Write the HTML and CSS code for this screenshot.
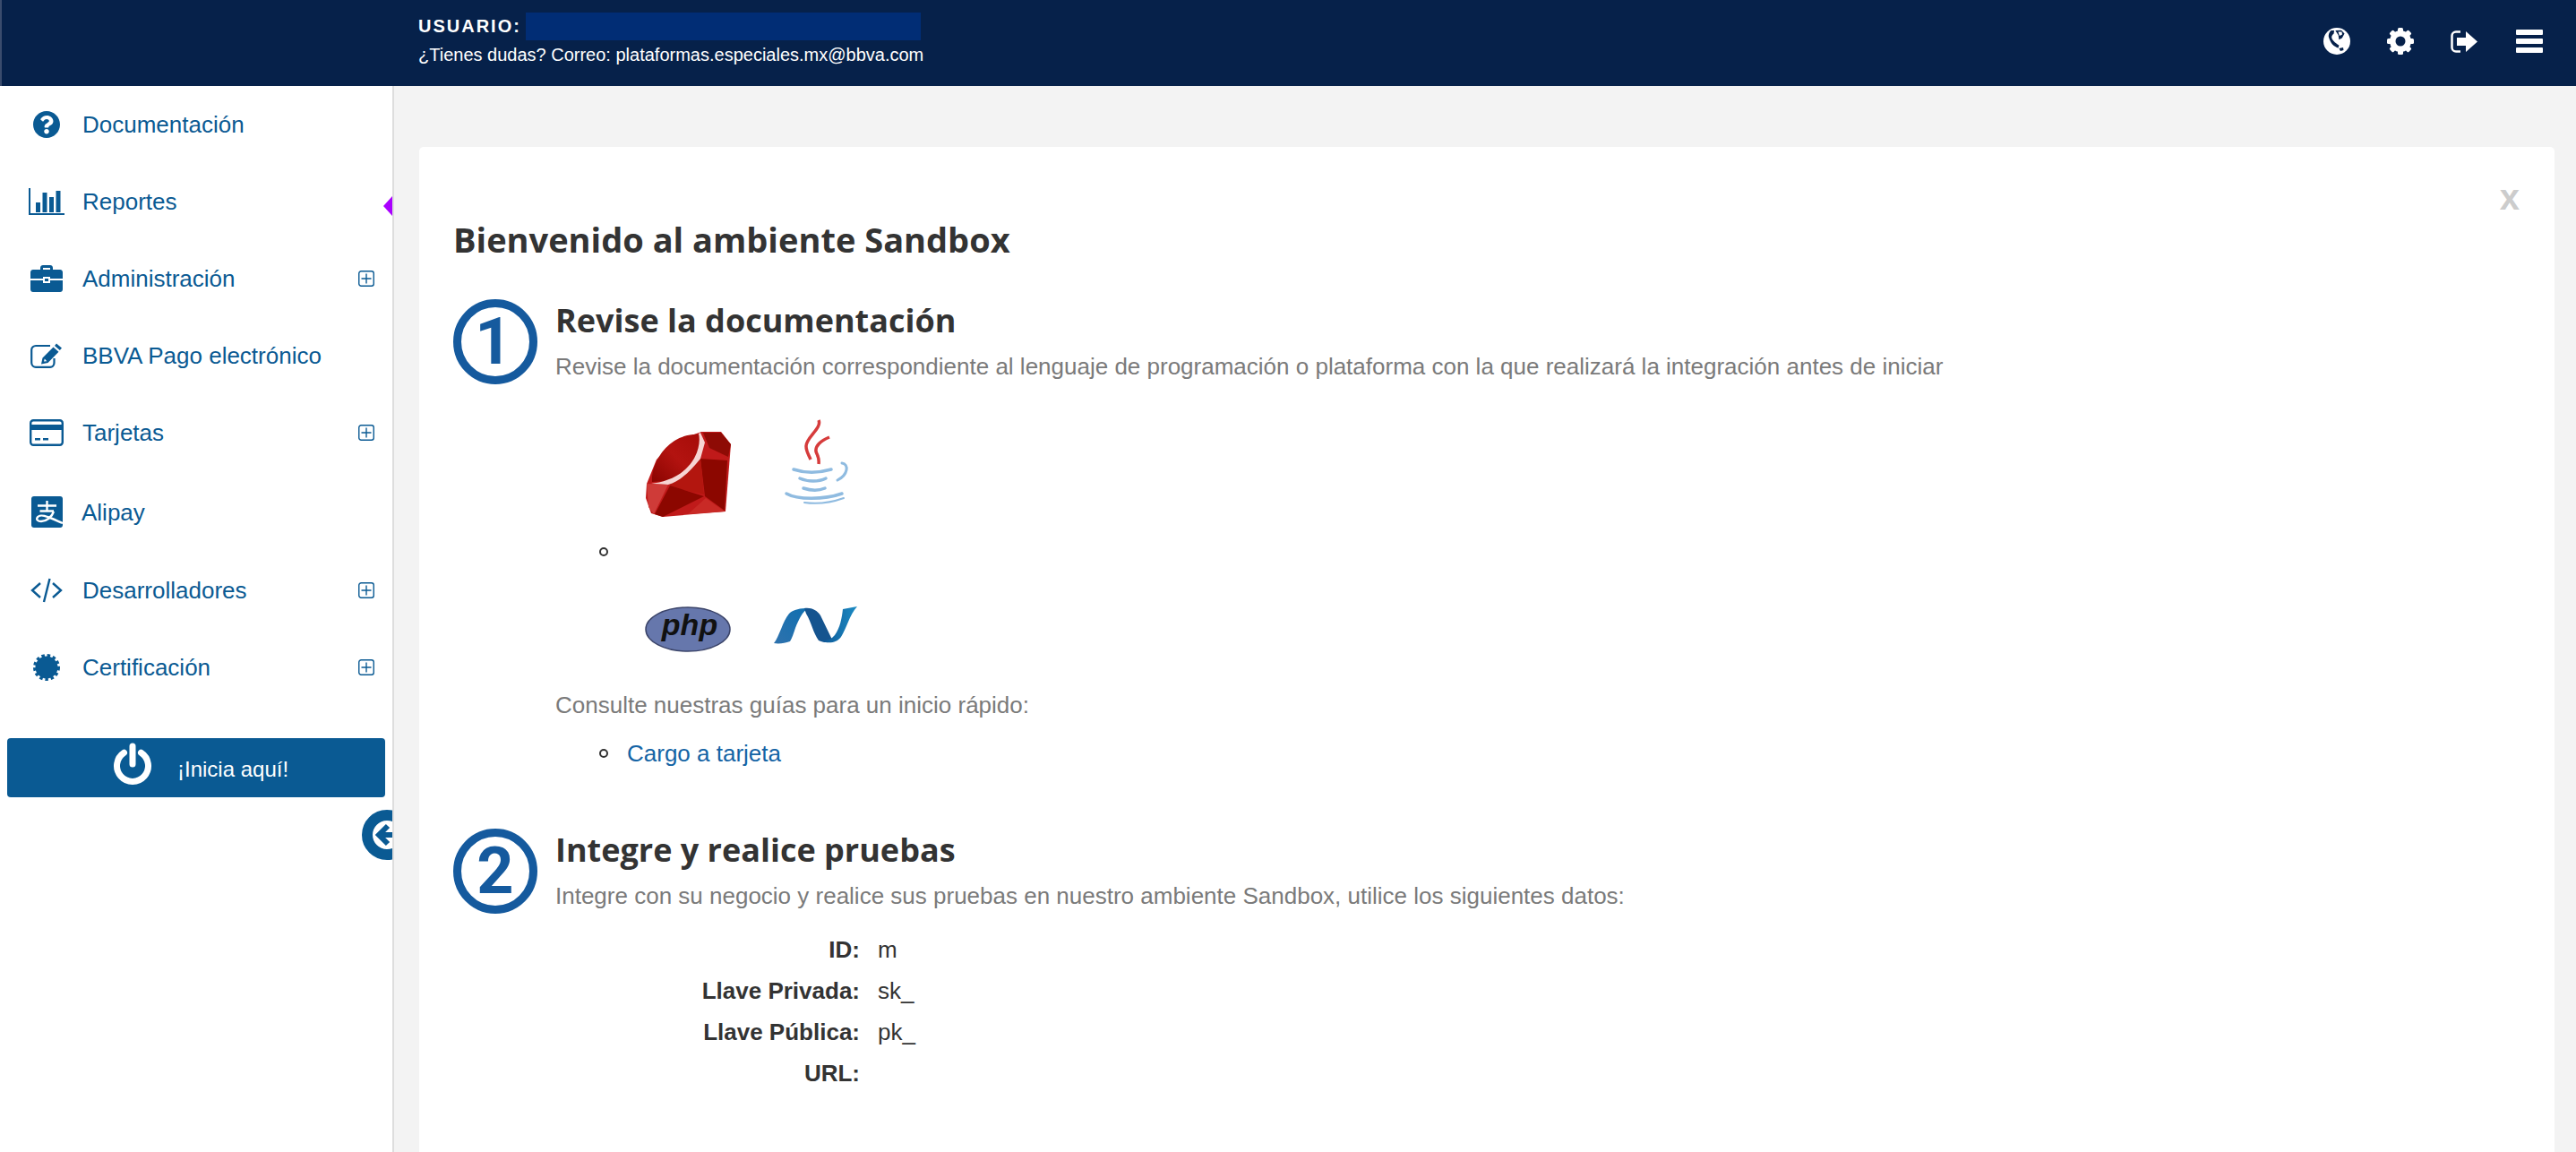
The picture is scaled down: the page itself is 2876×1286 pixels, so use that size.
FILE: index.html

```html
<!DOCTYPE html>
<html lang="es">
<head>
    <meta charset="UTF-8">
    <meta name="viewport" content="width=device-width, initial-scale=1.0">
    <title>Bienvenido al ambiente Sandbox</title>
    <link rel="stylesheet" href="styles.css">
</head>

<body>
    <svg class="defs" width="0" height="0" aria-hidden="true">
        <defs>
            <symbol id="mas" viewBox="0 0 18 18">
                <rect x="0.75" y="0.75" width="16.5" height="16.5" rx="2.5" fill="none" stroke="currentColor" stroke-width="1.4"/>
                <path d="M9 3.5v11M3.5 9h11" stroke="currentColor" stroke-width="1.4"/>
            </symbol>
        </defs>
    </svg>

    <header class="topbar">
        <div class="user-info">
            <div class="user-line">
                <span class="user-label">USUARIO:</span>
                <span class="user-name"></span>
            </div>
            <div class="user-mail">¿Tienes dudas? Correo: plataformas.especiales.mx@bbva.com</div>
        </div>
        <div class="top-icons">
            <!-- Globo -->
            <svg class="top-icon" viewBox="0 0 30 30">
                <circle cx="15" cy="15" r="15" fill="#fff"/>
                <path d="M8.5 3C6.5 5 5.5 7.5 5.8 10C7 14 8.5 16.5 10 18.5C12 20.5 14.5 22 16.7 22.5L17.4 19.5C15 18 13 16.5 11.6 15C10 13 9 11.5 9.2 9.9C9.5 8.5 10.5 7.5 11.6 6.5L12 3Z" fill="#06214a"/>
                <path d="M13.3 3L16.7 8.2L17.4 13.3L20.8 11.6L23.5 6.5L20 2.7Z" fill="#06214a"/>
                <path d="M16.5 4.5L20.5 4.5L21 7.5L18 9Z" fill="#fff"/>
                <path d="M17.5 23L22 22L22.5 25L19 26Z" fill="#06214a"/>
            </svg>
            <!-- Engrane -->
            <svg class="top-icon" viewBox="0 0 30 30">
                <g fill="#fff">
                    <rect x="12" y="0" width="6" height="30" rx="1.5"/>
                    <rect x="12" y="0" width="6" height="30" rx="1.5" transform="rotate(45 15 15)"/>
                    <rect x="12" y="0" width="6" height="30" rx="1.5" transform="rotate(90 15 15)"/>
                    <rect x="12" y="0" width="6" height="30" rx="1.5" transform="rotate(135 15 15)"/>
                </g>
                <circle cx="15" cy="15" r="8.5" fill="none" stroke="#fff" stroke-width="7"/>
                <circle cx="15" cy="15" r="5.5" fill="#06214a"/>
            </svg>
            <!-- Salir -->
            <svg class="top-icon top-exit" viewBox="0 0 30 25">
                <path d="M11 1.5H6C3.5 1.5 1.5 3.5 1.5 6V19C1.5 21.5 3.5 23.5 6 23.5H11" fill="none" stroke="#fff" stroke-width="2.5"/>
                <path d="M7 8H17V1L30 12.5L17 24V17H7Z" fill="#fff"/>
            </svg>
            <!-- Menu -->
            <div class="burger"><span></span><span></span><span></span></div>
        </div>
    </header>

    <div class="layout">
        <aside class="sidebar">
            <nav class="nav">
                <a class="nav-item">
                    <span class="nav-icon">
                        <svg width="30" height="30" viewBox="8 8 496 496"><path fill="currentColor" d="M504 256c0 136.997-111.043 248-248 248S8 392.997 8 256C8 119.083 119.043 8 256 8s248 111.083 248 248zM262.655 90c-54.497 0-89.255 22.957-116.549 63.758-3.536 5.286-2.353 12.415 2.715 16.258l34.699 26.31c5.205 3.947 12.621 3.008 16.665-2.122 17.864-22.658 30.113-35.797 57.303-35.797 20.429 0 45.698 13.148 45.698 32.958 0 14.976-12.363 22.667-32.534 33.976C247.128 238.528 216 254.941 216 296v4c0 6.627 5.373 12 12 12h56c6.627 0 12-5.373 12-12v-1.333c0-28.462 83.186-29.647 83.186-106.667 0-58.002-60.165-102-116.531-102zM256 338c-25.365 0-46 20.635-46 46 0 25.364 20.635 46 46 46s46-20.636 46-46c0-25.365-20.635-46-46-46z"/></svg>
                    </span>
                    <span class="nav-text">Documentación</span>
                </a>
                <a class="nav-item nav-active">
                    <span class="nav-icon">
                        <svg width="40" height="30" viewBox="0 0 40 30"><path d="M1 0V29H40" fill="none" stroke="currentColor" stroke-width="2"/><path fill="currentColor" d="M8 16h5v11H8zM15.5 5h5v22h-5zM23 10h5v17h-5zM30.5 3h5v24h-5z"/></svg>
                    </span>
                    <span class="nav-text">Reportes</span>
                </a>
                <a class="nav-item">
                    <span class="nav-icon">
                        <svg width="36" height="30" viewBox="0 0 36 30"><path fill="currentColor" d="M3 5H11V3C11 1.3 12.3 0 14 0H22C23.7 0 25 1.3 25 3V5H33C34.7 5 36 6.3 36 8V15H22V13H14V15H0V8C0 6.3 1.3 5 3 5ZM14 3V5H22V3ZM0 17H14V20H22V17H36V27C36 28.7 34.7 30 33 30H3C1.3 30 0 28.7 0 27ZM16 15H20V18H16Z"/></svg>
                    </span>
                    <span class="nav-text">Administración</span>
                    <svg class="nav-plus"><use href="#mas"/></svg>
                </a>
                <a class="nav-item">
                    <span class="nav-icon">
                        <svg width="36" height="28" viewBox="0 0 36 28"><path d="M22 3H6C3.5 3 1.2 5 1.2 7.5V22C1.2 24.8 3.5 26.8 6 26.8H22C24.5 26.8 26.5 24.8 26.5 22V17" fill="none" stroke="currentColor" stroke-width="2.2"/><path fill="currentColor" d="M29 0.5L35 5.5L32.8 8L27 3ZM25.5 4.5L31.5 9.8L19.5 22L12 23.5L13.5 16.5ZM15.8 17.5L15 20.5L18.3 20.3Z"/></svg>
                    </span>
                    <span class="nav-text">BBVA Pago electrónico</span>
                </a>
                <a class="nav-item">
                    <span class="nav-icon">
                        <svg width="38" height="30" viewBox="0 0 38 30"><rect x="1.2" y="1.2" width="35.6" height="27.6" rx="3" fill="none" stroke="currentColor" stroke-width="2.4"/><path fill="currentColor" d="M1 6h36v6H1zM6 21h6v2.5H6zM15 21h6v2.5h-6z"/></svg>
                    </span>
                    <span class="nav-text">Tarjetas</span>
                    <svg class="nav-plus"><use href="#mas"/></svg>
                </a>
                <a class="nav-item nav-alipay">
                    <span class="nav-icon">
                        <svg width="35" height="35" viewBox="0 0 35 35"><rect width="35" height="35" rx="3" fill="currentColor"/><path d="M7 10.5H28M9.5 16.5H25M17.5 5V16.5M25 17C23 23 17 28 11 28C7 28 5.5 26 6.5 24C8 21 13 21 18 23C24 25 30 28 35 30" fill="none" stroke="#fff" stroke-width="2.4"/></svg>
                    </span>
                    <span class="nav-text">Alipay</span>
                </a>
                <a class="nav-item">
                    <span class="nav-icon">
                        <svg width="36" height="28" viewBox="0 0 36 28"><path d="M11 6L2 14L11 22M25 6L34 14L25 22M21.5 1L15 27" fill="none" stroke="currentColor" stroke-width="2.4"/></svg>
                    </span>
                    <span class="nav-text">Desarrolladores</span>
                    <svg class="nav-plus"><use href="#mas"/></svg>
                </a>
                <a class="nav-item">
                    <span class="nav-icon">
                        <svg width="30" height="30" viewBox="0 0 30 30"><circle cx="15" cy="15" r="12.5" fill="currentColor"/><circle cx="15" cy="15" r="13" fill="none" stroke="currentColor" stroke-width="4" stroke-dasharray="3.4 2.75"/></svg>
                    </span>
                    <span class="nav-text">Certificación</span>
                    <svg class="nav-plus"><use href="#mas"/></svg>
                </a>
            </nav>

            <a class="start-btn">
                <svg class="start-icon" width="44" height="48" viewBox="0 0 44 48"><path d="M12.5 11.2A17.5 17.5 0 1 0 31.5 11.2" fill="none" stroke="#fff" stroke-width="7" stroke-linecap="round"/><path d="M22 4V24" stroke="#fff" stroke-width="7" stroke-linecap="round"/></svg>
                <span>¡Inicia aquí!</span>
            </a>

            <div class="collapse-btn">
                <svg width="56" height="56" viewBox="0 0 56 56"><circle cx="28" cy="28" r="22" fill="#fff" stroke="#0a5a93" stroke-width="12"/><path d="M29 18L19 28L29 38M20 28H40" fill="none" stroke="#0a5a93" stroke-width="6"/></svg>
            </div>
        </aside>

        <main class="main">
            <section class="card">
                <span class="card-close">x</span>
                <h1 class="card-title">Bienvenido al ambiente Sandbox</h1>

                <div class="step">
                    <svg class="step-num" width="94" height="95" viewBox="0 0 94 95">
                        <ellipse cx="47" cy="47.5" rx="42.5" ry="43" fill="none" stroke="#155a9e" stroke-width="9"/>
                        <text x="45" y="72" class="step-digit" text-anchor="middle">1</text>
                    </svg>
                    <div class="step-body">
                        <h2 class="step-title">Revise la documentación</h2>
                        <p class="step-text">Revise la documentación correspondiente al lenguaje de programación o plataforma con la que realizará la integración antes de iniciar</p>

                        <div class="logos-row">
                            <span class="bullet logos-bullet"></span>
                            <div class="logos">
                                <!-- Ruby -->
                                <svg class="logo-tall" viewBox="0 -14 96 110">
                                    <defs>
                                        <linearGradient id="rubyOval" x1="0" y1="1" x2="1" y2="0">
                                            <stop offset="0" stop-color="#8a0400"/>
                                            <stop offset="0.5" stop-color="#b31310"/>
                                            <stop offset="1" stop-color="#a50c08"/>
                                        </linearGradient>
                                    </defs>
                                    <path fill="#c01a1a" d="M63 0H85L96 14L90 89L20 95L7 91L1 74L2 58L13 31L33 11Z"/>
                                    <path fill="url(#rubyOval)" d="M8 56C7 40 17 20 33 10C44 3 56 2 62 3L64 9L60 28C50 42 37 51 24 55Z"/>
                                    <path fill="#8e0b05" d="M65 1H85L96 14L93 28L72 18Z"/>
                                    <path fill="#8c0700" d="M62 30L92 32L89 88L67 72Z"/>
                                    <path fill="#b3160f" d="M62 30L66 70L30 62L26 56C40 53 52 43 62 30Z"/>
                                    <path fill="#f6d5d3" d="M62 1L67 12L62 30C50 45 38 56 26 59L7 58C20 56 36 52 48 39C57 30 63 14 60 2Z"/>
                                    <path fill="#cf3b38" d="M2 58L26 59L10 92L4 84Z"/>
                                    <path fill="#8c0700" d="M28 60L66 72L20 95L11 92Z"/>
                                    <path fill="#c92a26" d="M68 74L89 89L48 92Z"/>
                                </svg>
                                <!-- Java -->
                                <svg class="logo-tall" viewBox="0 0 96 110">
                                    <path d="M50 1C54 10 36 20 36 30C36 36 39 40 41 45" fill="none" stroke="#d63c3c" stroke-width="3.5"/>
                                    <path d="M62 20C52 24 46 30 47 36C48 40 51 42 50 50" fill="none" stroke="#d63c3c" stroke-width="3.5"/>
                                    <g fill="none" stroke="#8fbbe0" stroke-linecap="round">
                                        <path d="M22 56C34 60 50 60 64 56" stroke-width="3.5"/>
                                        <path d="M76 49C84 50 83 62 71 68" stroke-width="3"/>
                                        <path d="M29 66C38 70 50 70 58 66" stroke-width="3.5"/>
                                        <path d="M33 77C42 80 50 80 57 77" stroke-width="3.5"/>
                                        <path d="M14 83C26 90 56 90 76 83" stroke-width="3.5"/>
                                        <path d="M34 93C48 95 64 93 78 88" stroke-width="2"/>
                                    </g>
                                </svg>
                                <!-- PHP -->
                                <svg class="logo-wide" viewBox="0 0 96 51">
                                    <ellipse cx="48" cy="25.5" rx="47" ry="24.5" fill="#6677ac" stroke="#3b4469" stroke-width="1.5"/>
                                    <text x="50" y="32" class="php-text" text-anchor="middle">php</text>
                                </svg>
                                <!-- .NET -->
                                <svg class="logo-wide" viewBox="0 0 96 51">
                                    <defs>
                                        <linearGradient id="netA" x1="0" y1="1" x2="1" y2="0">
                                            <stop offset="0" stop-color="#2f72ad"/>
                                            <stop offset="1" stop-color="#0f6fb0"/>
                                        </linearGradient>
                                        <linearGradient id="netB" x1="0" y1="0" x2="1" y2="0">
                                            <stop offset="0" stop-color="#0d5595"/>
                                            <stop offset="1" stop-color="#1c8cc4"/>
                                        </linearGradient>
                                    </defs>
                                    <path fill="url(#netA)" d="M0 41C6 34 10 16 17 8C22 3 30 2 38 2C32 6 28 14 24 24C22 30 20 36 18 39C12 41 6 42 0 41Z"/>
                                    <path fill="#15548f" d="M34 2C42 1 48 4 52 10L66 39C60 41 54 40 50 38C44 30 42 18 36 8Z"/>
                                    <path fill="url(#netB)" d="M52 38C60 42 70 41 75 34C81 25 84 10 93 0L77 3C76 12 74 24 68 32C64 37 58 39 52 38Z"/>
                                </svg>
                            </div>
                        </div>

                        <p class="step-text guides">Consulte nuestras guías para un inicio rápido:</p>
                        <div class="guide-item">
                            <span class="bullet"></span>
                            <a class="guide-link">Cargo a tarjeta</a>
                        </div>
                    </div>
                </div>

                <div class="step step-two">
                    <svg class="step-num" width="94" height="95" viewBox="0 0 94 95">
                        <ellipse cx="47" cy="47.5" rx="42.5" ry="43" fill="none" stroke="#155a9e" stroke-width="9"/>
                        <text x="47" y="72" class="step-digit" text-anchor="middle">2</text>
                    </svg>
                    <div class="step-body">
                        <h2 class="step-title">Integre y realice pruebas</h2>
                        <p class="step-text">Integre con su negocio y realice sus pruebas en nuestro ambiente Sandbox, utilice los siguientes datos:</p>
                        <dl class="keys">
                            <dt>ID:</dt><dd>m</dd>
                            <dt>Llave Privada:</dt><dd>sk_</dd>
                            <dt>Llave Pública:</dt><dd>pk_</dd>
                            <dt>URL:</dt><dd></dd>
                        </dl>
                    </div>
                </div>
            </section>
        </main>
    </div>
</body>
</html>
```

FILE: styles.css

```css
* {
    box-sizing: border-box;
}

html, body {
    height: 100%;
    margin: 0;
    overflow: hidden;
}

body {
    font-family: "Liberation Sans", Arial, sans-serif;
    color: #333;
    background-color: #f3f3f3;
}

.defs {
    position: absolute;
}

/* Barra superior */
.topbar {
    height: 96px;
    display: flex;
    justify-content: space-between;
    background-color: #06214a;
    border-left: 2px solid #3a4c6d;
    color: #fff;
    padding: 0 37px 0 465px;
}

.user-info {
    padding-top: 14px;
}

.user-line {
    display: flex;
    align-items: center;
    height: 31px;
}

.user-label {
    font-size: 20px;
    font-weight: bold;
    letter-spacing: 2px;
    width: 120px;
}

.user-name {
    display: block;
    width: 441px;
    height: 31px;
    background-color: #012d75;
}

.user-mail {
    font-size: 20px;
    line-height: 30px;
    margin-top: 1px;
}

.top-icons {
    display: flex;
    align-items: center;
    height: 92px;
}

.top-icon {
    width: 30px;
    height: 30px;
    margin-right: 41px;
}

.top-exit {
    height: 25px;
    margin-right: 43px;
}

.burger {
    width: 30px;
    display: flex;
    flex-direction: column;
    gap: 4px;
}

.burger span {
    height: 6px;
    border-radius: 1px;
    background-color: #fff;
}

/* Layout */
.layout {
    display: flex;
    height: calc(100% - 96px);
}

.sidebar {
    position: relative;
    width: 440px;
    flex-shrink: 0;
    background-color: #fff;
    border-right: 2px solid #ddd;
    overflow: hidden;
}

.nav-item {
    position: relative;
    display: flex;
    align-items: center;
    height: 86px;
    padding: 0 20px 0 32px;
    color: #0a5a93;
}

.nav-alipay {
    height: 90px;
}

.nav-alipay .nav-text {
    margin-left: -1px;
    padding-top: 2px;
}

.nav-icon {
    width: 40px;
    display: flex;
    justify-content: center;
    align-items: center;
    margin-right: 20px;
}

.nav-text {
    font-size: 26px;
    flex: 1;
}

.nav-plus {
    width: 18px;
    height: 18px;
}

.nav-active::after {
    content: "";
    position: absolute;
    right: 0;
    top: 37px;
    border-style: solid;
    border-width: 11px 10px 11px 0;
    border-color: transparent #aa00ff transparent transparent;
}

.start-btn {
    display: flex;
    align-items: center;
    height: 66px;
    margin: 36px 8px 0;
    padding-left: 118px;
    border-radius: 4px;
    background-color: #0a5a93;
    color: #fff;
    font-size: 24px;
}

.start-icon {
    margin-bottom: 9px;
}

.start-btn span {
    margin-left: 28px;
    padding-top: 4px;
}

.collapse-btn {
    position: absolute;
    left: 404px;
    top: 808px;
    line-height: 0;
}

/* Contenido */
.main {
    flex: 1;
    padding: 68px 24px 0 28px;
    min-width: 0;
}

.card {
    position: relative;
    height: 100%;
    padding: 78px 38px 0;
    background-color: #fff;
    border-radius: 5px 5px 0 0;
}

.card-close {
    position: absolute;
    top: 34px;
    right: 39px;
    font-size: 40px;
    line-height: 44px;
    font-weight: bold;
    color: #ccc;
}

.card-title {
    font-family: "Open Sans", sans-serif;
    font-size: 38px;
    line-height: 50px;
    font-weight: bold;
    color: #333;
    margin: 0 0 42px;
}

.step {
    display: flex;
    gap: 20px;
}

.step-two {
    margin-top: 66px;
}

.step-num {
    flex-shrink: 0;
}

.step-digit {
    font-family: Roboto, sans-serif;
    font-size: 72px;
    font-weight: 700;
    fill: #155a9e;
}

.step-body {
    flex: 1;
}

.step-title {
    font-family: "Open Sans", sans-serif;
    font-size: 36px;
    line-height: 48px;
    font-weight: bold;
    color: #333;
    margin: 0;
}

.step-text {
    font-size: 26px;
    line-height: 36px;
    color: #7a7a7a;
    margin: 9px 0 0;
}

.logos-row {
    display: flex;
    margin-top: 41px;
    padding-left: 49px;
}

.bullet {
    width: 10px;
    height: 10px;
    flex-shrink: 0;
    border: 2px solid #333;
    border-radius: 50%;
}

.logos-bullet {
    margin-top: 143px;
}

.logos {
    display: grid;
    grid-template-columns: 96px 96px;
    column-gap: 48px;
    row-gap: 99px;
    margin-left: 41px;
}

.logo-tall {
    display: block;
    width: 96px;
    height: 110px;
}

.logo-wide {
    display: block;
    width: 96px;
    height: 51px;
}

.php-text {
    font-family: "Liberation Sans", sans-serif;
    font-size: 34px;
    font-weight: bold;
    font-style: italic;
    fill: #111;
}

.guides {
    margin-top: 41px;
}

.guide-item {
    display: flex;
    align-items: center;
    margin-top: 18px;
    padding-left: 49px;
}

.guide-link {
    font-size: 26px;
    line-height: 36px;
    color: #1464a5;
    margin-left: 21px;
}

.keys {
    display: grid;
    grid-template-columns: 340px 1fr;
    column-gap: 20px;
    grid-auto-rows: 46px;
    margin: 19px 0 0;
    font-size: 26px;
    line-height: 46px;
}

.keys dt {
    font-weight: bold;
    text-align: right;
}

.keys dd {
    margin: 0;
}
```
